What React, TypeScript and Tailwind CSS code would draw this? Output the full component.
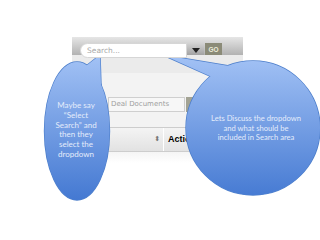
import React from 'react';

// Callout bubbles drawn over the UI screenshot
function Bubbles() {
  return (
    <svg className="absolute inset-0" width={320} height={240} viewBox="0 0 320 240">
      <defs>
        <linearGradient id="bl" x1="0" y1="55" x2="0" y2="200" gradientUnits="userSpaceOnUse">
          <stop offset="0" stopColor="#a3c2f5" />
          <stop offset="1" stopColor="#4479d2" />
        </linearGradient>
      </defs>
      {/* outlines first, then fills on top to hide inner seams */}
      <g fill="url(#bl)" stroke="#4f80cc" strokeWidth={1.4}>
        <ellipse cx={77} cy={131} rx={32.5} ry={69} />
        <polygon points="100,55 86,66 101,85" />
        <circle cx={253} cy={128} r={67} />
        <polygon points="163,55 212,77 229,66" />
      </g>
      <g fill="url(#bl)">
        <ellipse cx={77} cy={131} rx={32.5} ry={69} />
        <polygon points="100,55 86,66 101,85" />
        <circle cx={253} cy={128} r={67} />
        <polygon points="163,55 212,77 229,66" />
      </g>
    </svg>
  );
}

export default function App() {
  return (
    <div className="relative w-[320px] h-[240px] bg-white overflow-hidden">
      <div className="ml-[72px] pt-[37px] w-[171px]">
        {/* search bar */}
        <div className="flex items-start h-[18px] pt-[6px] pl-[8px] bg-linear-to-b from-[#e6e6e6] to-[#b2b2b2]">
          <div className="relative z-10 flex items-center w-[107px] h-[15px] rounded-l-full bg-white border border-[#d6d6d6] pl-[6px] text-[7.5px] text-[#a8a8a8] font-['DejaVu_Sans',sans-serif]">
            Search...
          </div>
          <div className="flex items-center justify-center w-[17px] h-[14px] bg-linear-to-b from-[#d4d4d4] to-[#9a9a9a]">
            <span className="block w-0 h-0 border-l-[4px] border-r-[4px] border-t-[5px] border-l-transparent border-r-transparent border-t-[#222]" />
          </div>
          <div className="ml-[1px] flex items-center justify-center w-[17px] h-[14px] bg-[#8b8b78] text-[6.5px] font-bold text-[#ecebd9] font-['Liberation_Sans',sans-serif]">
            GO
          </div>
        </div>
        {/* page body */}
        <div className="h-[108px] bg-[#f3f3f3] flex flex-col">
          <div className="h-[18px] bg-[#ebebeb]" />
          <div className="mt-[24px] flex h-[15px]">
            <div className="ml-[36px] w-[77px] h-[15px] bg-[#f7f7f7] border border-[#cfcfcf] flex items-center pl-[2px] text-[7px] text-[#a0a0a0] font-['DejaVu_Sans',sans-serif]">
              Deal Documents
            </div>
            <div className="ml-[1px] w-[24px] h-[15px] bg-[#a3a394]" />
          </div>
          <div className="mt-[15px] ml-[36px] h-[25px] flex items-center bg-linear-to-b from-[#f4f4f4] to-[#e2e2e2] border-y border-[#cdcdcd]">
            <div className="w-[55px] flex justify-end pr-[3px] text-[7px] text-[#777] leading-none font-['DejaVu_Sans',sans-serif]">⬍</div>
            <div className="w-px h-full bg-[#cfcfcf] border-r border-white" />
            <div className="flex-1 pl-[4px] text-[9px] font-bold text-black font-['Liberation_Sans',sans-serif]">
              Action
            </div>
          </div>
          <div className="flex-1 bg-linear-to-b from-[#f5f5f5] to-white" />
        </div>
      </div>

      <Bubbles />

      <div className="absolute left-[41px] top-[101px] w-[70px] text-center text-[8px] leading-[9.8px] text-[#e4ecfb] font-['Lato',sans-serif]">
        Maybe say<br />“Select<br />Search” and<br />then they<br />select the<br />dropdown
      </div>
      <div className="absolute left-[206px] top-[114px] w-[100px] text-center text-[7.6px] leading-[9.7px] text-[#e4ecfb] font-['Lato',sans-serif]">
        Lets Discuss the dropdown<br />and what should be<br />included in Search area
      </div>
    </div>
  );
}
